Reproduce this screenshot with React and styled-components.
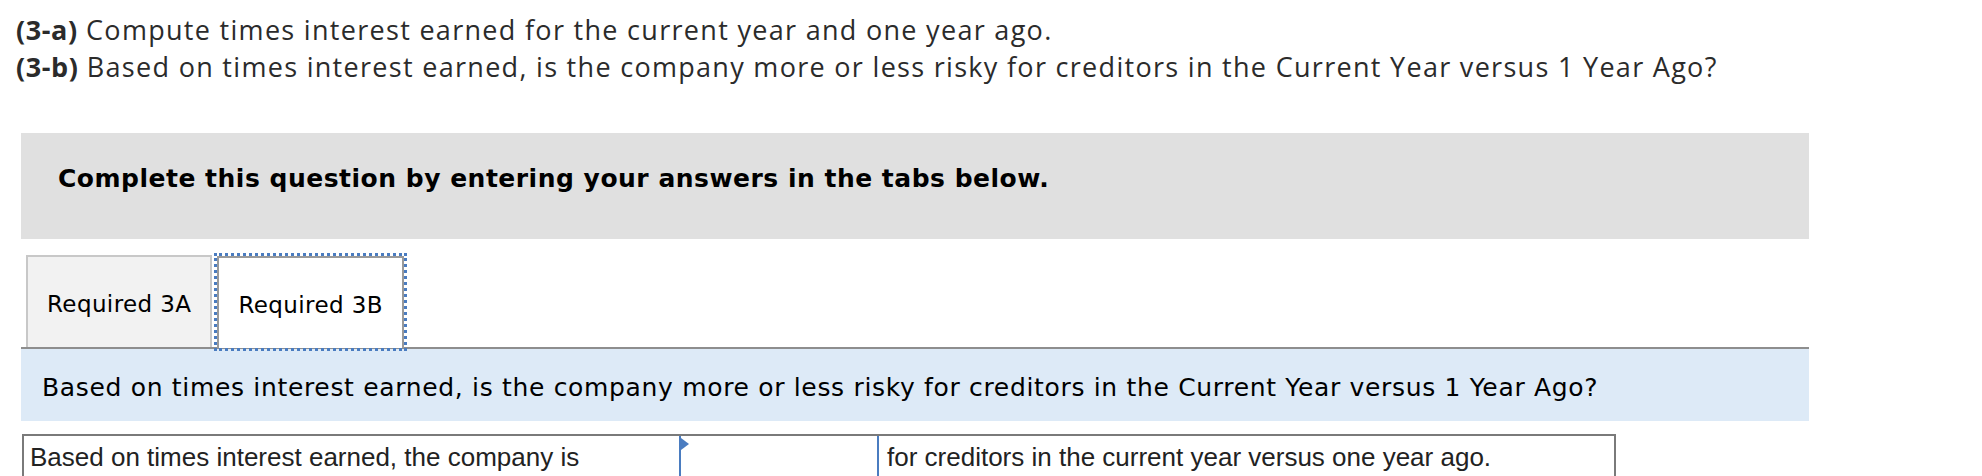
import React from "react";
import styled, { createGlobalStyle } from "styled-components";

const GlobalStyle = createGlobalStyle`
  html, body {
    margin: 0;
    padding: 0;
    background: #ffffff;
  }
`;

const Page = styled.div`
  width: 1982px;
  padding: 11px 0 0 16px;
  box-sizing: border-box;
`;

const Prompt = styled.div`
  font-family: "Open Sans", "Lato", sans-serif;
  font-size: 27px;
  line-height: 37px;
  color: #2b2b2b;
  letter-spacing: 1.3px;

  b {
    font-weight: 700;
    letter-spacing: 0.6px;
  }
`;

const Panel = styled.div`
  width: 1788px;
  margin: 48px 0 0 5px;
`;

const Instructions = styled.div`
  background: #e0e0e0;
  height: 106px;
  box-sizing: border-box;
  padding: 31px 37px 0;
  font-family: "DejaVu Sans", Verdana, sans-serif;
  font-weight: 700;
  font-size: 25px;
  letter-spacing: 0.5px;
  color: #000;
`;

const TabStrip = styled.div`
  display: flex;
  align-items: flex-end;
  gap: 5px;
  margin-top: 16px;
  padding-left: 5px;
  border-bottom: 2px solid #8e8e8e;
`;

const Tab = styled.div`
  display: flex;
  align-items: center;
  height: 92px;
  box-sizing: border-box;
  padding: 3px 19px 0 19px;
  font-family: "DejaVu Sans", Verdana, sans-serif;
  font-size: 23px;
  letter-spacing: 0.4px;
  color: #000;
  background: ${(p) => (p.active ? "#ffffff" : "#f2f2f2")};
  border: 2px solid ${(p) => (p.active ? "#9a9a9a" : "#c8c8c8")};
  border-bottom: none;
  outline: ${(p) => (p.active ? "3px dotted #4a7cc0" : "none")};
  outline-offset: 0px;
  position: relative;
  z-index: ${(p) => (p.active ? 1 : 0)};
  margin-bottom: ${(p) => (p.active ? "-1px" : "0")};
`;

const Question = styled.div`
  display: flex;
  align-items: center;
  height: 72px;
  box-sizing: border-box;
  padding: 4px 21px 0;
  background: #ddeaf7;
  font-family: "DejaVu Sans", Verdana, sans-serif;
  font-size: 25px;
  letter-spacing: 0.67px;
  color: #000;
`;

const AnswerTable = styled.div`
  display: flex;
  width: 1594px;
  height: 56px;
  margin: 13px 0 0 1px;
  border: 2px solid #7a7a7a;
  border-bottom: none;
  box-sizing: border-box;
  font-family: "Liberation Sans", Arial, sans-serif;
  font-size: 26px;
  color: #222;
`;

const Cell = styled.div`
  width: ${(p) => p.width};
  padding: 6px 8px 0 ${(p) => p.padLeft || "6px"};
  box-sizing: border-box;
  white-space: nowrap;
`;

const Select = styled.div`
  position: relative;
  width: 200px;
  border-left: 2px solid #4a7cc0;
  border-right: 2px solid #4a7cc0;
  box-sizing: border-box;

  &::before {
    content: "";
    position: absolute;
    left: 0;
    top: 2px;
    border-top: 6px solid transparent;
    border-bottom: 6px solid transparent;
    border-left: 8px solid #4a7cc0;
  }
`;

export default function App() {
  return (
    <Page>
      <GlobalStyle />
      <Prompt>
        <b>(3-a)</b> Compute times interest earned for the current year and one year ago.
        <br />
        <b>(3-b)</b> Based on times interest earned, is the company more or less risky for creditors in the Current Year versus 1 Year Ago?
      </Prompt>
      <Panel>
        <Instructions>Complete this question by entering your answers in the tabs below.</Instructions>
        <TabStrip>
          <Tab>Required 3A</Tab>
          <Tab active>Required 3B</Tab>
        </TabStrip>
        <Question>
          Based on times interest earned, is the company more or less risky for creditors in the Current Year versus 1 Year Ago?
        </Question>
        <AnswerTable>
          <Cell width="655px">Based on times interest earned, the company is</Cell>
          <Select />
          <Cell width="auto" padLeft="8px">for creditors in the current year versus one year ago.</Cell>
        </AnswerTable>
      </Panel>
    </Page>
  );
}
